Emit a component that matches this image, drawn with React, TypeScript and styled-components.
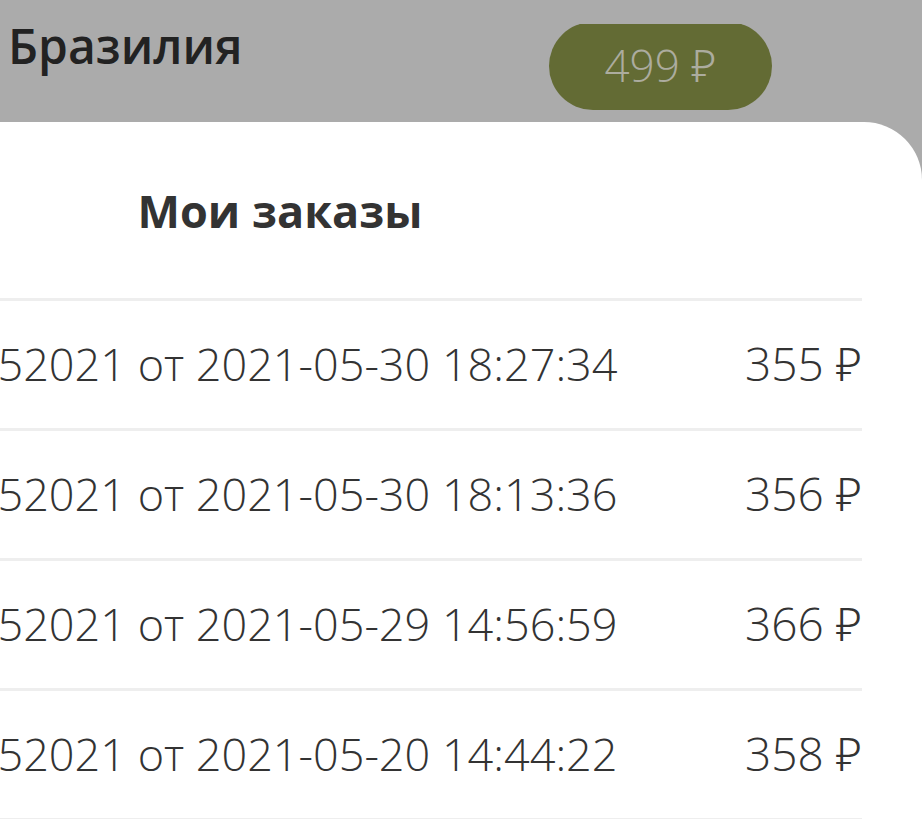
import React from "react";
import styled, { createGlobalStyle } from "styled-components";

const GlobalStyle = createGlobalStyle`
  html, body {
    margin: 0;
    padding: 0;
    background: #ababab;
    overflow: hidden;
  }
  body {
    font-family: "Open Sans", "Noto Sans", sans-serif;
    color: #333;
  }
`;

const Viewport = styled.div`
  width: 922px;
  height: 819px;
  overflow: hidden;
`;

// the phone screen is wider than the visible crop, its left part is off view
const Screen = styled.div`
  width: 1284px;
  margin-left: -362px;
  display: flex;
  flex-direction: column;
`;

const Header = styled.header`
  height: 122px;
  box-sizing: border-box;
  background: #ababab;
  display: flex;
  align-items: flex-start;
  padding-left: 370px;
`;

const City = styled.div`
  margin-top: 14px;
  width: 179px;
  font-size: 48px;
  font-weight: 600;
  line-height: 64px;
  color: #222;
  white-space: nowrap;
`;

const PillClip = styled.div`
  margin-top: 24px;
  margin-left: 362px;
  height: 86px;
  overflow: hidden;
`;

const Pill = styled.button`
  margin-top: -2px;
  width: 223px;
  height: 88px;
  border: none;
  border-radius: 44px;
  background: #636b34;
  color: #acac9f;
  font-family: inherit;
  font-size: 44px;
  font-weight: 300;
  line-height: 1;
  display: flex;
  align-items: center;
  justify-content: center;
  padding: 0 0 2px;
`;

const Sheet = styled.section`
  background: #fff;
  border-radius: 58px 58px 0 0;
  padding: 0 60px;
  flex: 1;
`;

const Title = styled.h1`
  margin: 0;
  height: 176px;
  display: flex;
  align-items: center;
  justify-content: center;
  font-size: 45px;
  font-weight: 700;
  color: #333;
`;

const OrderRow = styled.div`
  height: 130px;
  box-sizing: border-box;
  border-top: 3px solid #eeeeee;
  display: flex;
  align-items: center;
  justify-content: space-between;
  font-size: 45px;
  font-weight: 300;
  color: #333;
  white-space: nowrap;
  padding-bottom: 3px;
`;

const OrderName = styled.span``;

const OrderSum = styled.span`
  font-size: 46px;
`;

const orders = [
  { id: "1030052021", date: "2021-05-30 18:27:34", sum: 355 },
  { id: "1030052021", date: "2021-05-30 18:13:36", sum: 356 },
  { id: "1029052021", date: "2021-05-29 14:56:59", sum: 366 },
  { id: "1020052021", date: "2021-05-20 14:44:22", sum: 358 },
  { id: "1019052021", date: "2021-05-19 12:10:05", sum: 340 },
];

export default function App() {
  return (
    <Viewport>
      <GlobalStyle />
      <Screen>
        <Header>
          <City>Бразилия</City>
          <PillClip>
            <Pill>499 ₽</Pill>
          </PillClip>
        </Header>
        <Sheet>
          <Title>Мои заказы</Title>
          {orders.map(order => (
            <OrderRow key={order.date}>
              <OrderName>
                Заказ №{order.id} от {order.date}
              </OrderName>
              <OrderSum>{order.sum} ₽</OrderSum>
            </OrderRow>
          ))}
        </Sheet>
      </Screen>
    </Viewport>
  );
}
